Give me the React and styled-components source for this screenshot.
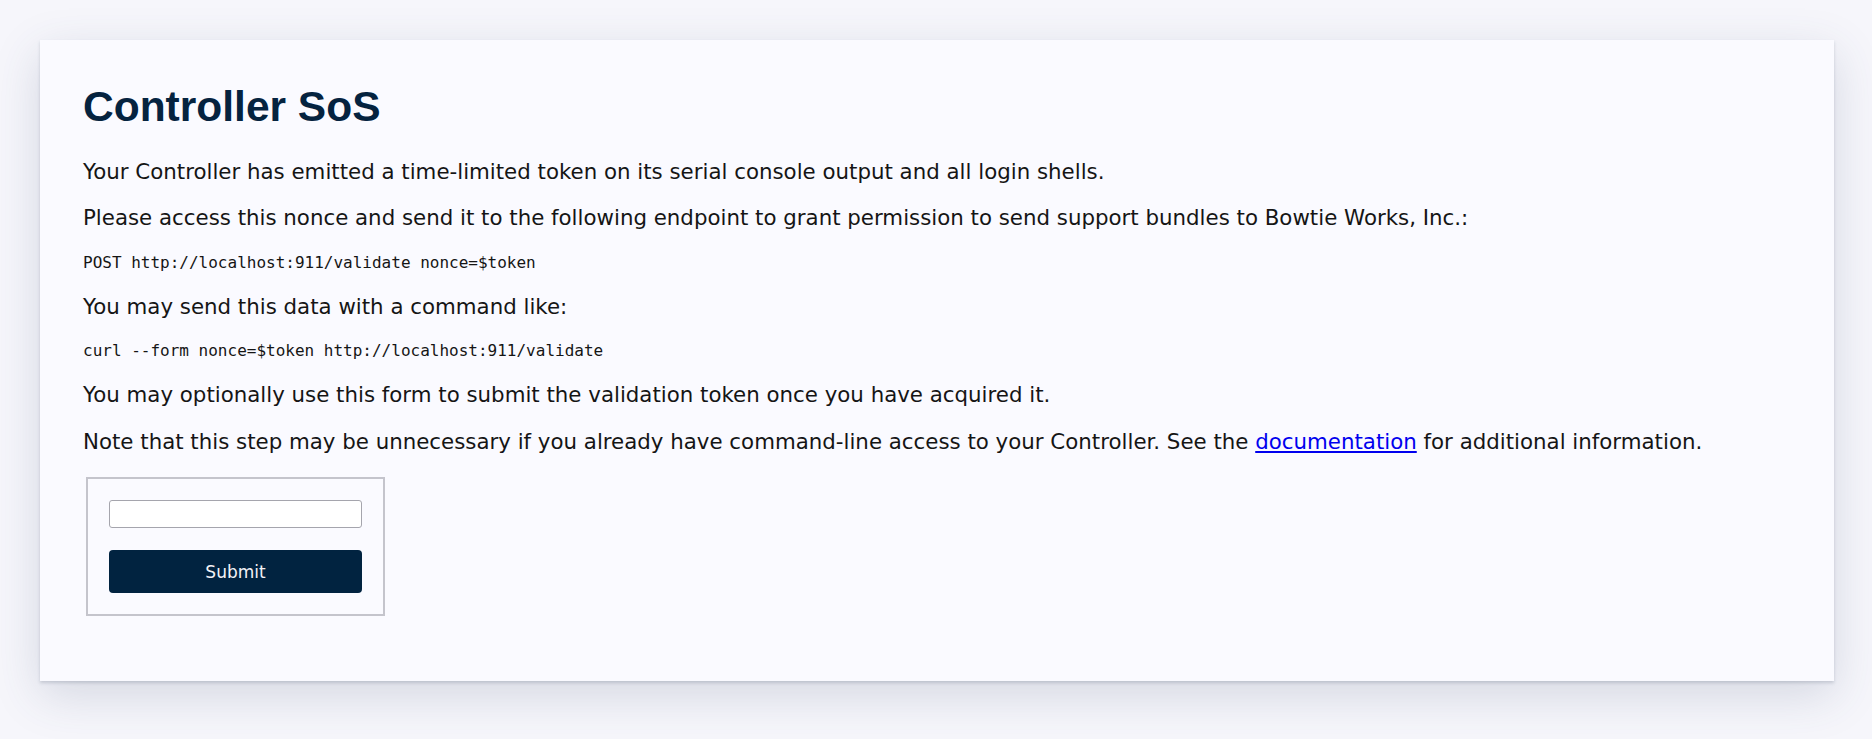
import React from 'react'
import styled, { createGlobalStyle } from 'styled-components'

const GlobalStyle = createGlobalStyle`
  html, body {
    margin: 0;
    padding: 0;
    background: #f6f6fb;
  }
  body {
    font-family: "DejaVu Sans", sans-serif;
    color: #151515;
  }
`

const Page = styled.div`
  padding: 40px 38px 40px 40px;
  min-height: 739px;
  box-sizing: border-box;
`

const Card = styled.main`
  background: #fafaff;
  padding: 43px 43px 65px 43px;
  box-shadow: 0 2px 3px rgba(60, 75, 100, 0.2), 0 14px 44px rgba(60, 75, 110, 0.18);
`

const Title = styled.h1`
  margin: 0 0 25.5px;
  font-family: "Liberation Sans", Arial, sans-serif;
  font-size: 42.5px;
  line-height: 48px;
  font-weight: 700;
  color: #05233f;
`

const Text = styled.p`
  margin: 0 0 16px;
  font-size: 21.33px;
  line-height: 30.5px;
`

const Code = styled.pre`
  margin: 0 0 16px;
  font-family: "DejaVu Sans Mono", monospace;
  font-size: 16px;
  line-height: 26px;
`

const DocLink = styled.a`
  color: #0000ee;
  text-decoration: underline;
`

const FormBox = styled.form`
  display: flex;
  flex-direction: column;
  gap: 22px;
  width: 253px;
  margin: 20px 0 0 3px;
  padding: 21px;
  border: 2px solid #c4c4cc;
`

const TokenInput = styled.input`
  box-sizing: border-box;
  width: 100%;
  height: 28px;
  border: 1px solid #a5a5ad;
  border-radius: 3px;
  background: #fff;
  font-size: 16px;
`

const SubmitButton = styled.button`
  box-sizing: border-box;
  width: 100%;
  height: 43px;
  border: none;
  border-radius: 4px;
  background: #012340;
  color: #f2f2f6;
  font-family: "DejaVu Sans", sans-serif;
  font-size: 17px;
`

export default function App() {
  return (
    <>
      <GlobalStyle />
      <Page>
        <Card>
          <Title>Controller SoS</Title>
          <Text>Your Controller has emitted a time-limited token on its serial console output and all login shells.</Text>
          <Text>Please access this nonce and send it to the following endpoint to grant permission to send support bundles to Bowtie Works, Inc.:</Text>
          <Code>POST http://localhost:911/validate nonce=$token</Code>
          <Text>You may send this data with a command like:</Text>
          <Code>curl --form nonce=$token http://localhost:911/validate</Code>
          <Text>You may optionally use this form to submit the validation token once you have acquired it.</Text>
          <Text>
            Note that this step may be unnecessary if you already have command-line access to your Controller. See the{' '}
            <DocLink href="#">documentation</DocLink> for additional information.
          </Text>
          <FormBox onSubmit={e => e.preventDefault()}>
            <TokenInput type="text" name="nonce" />
            <SubmitButton type="submit">Submit</SubmitButton>
          </FormBox>
        </Card>
      </Page>
    </>
  )
}
